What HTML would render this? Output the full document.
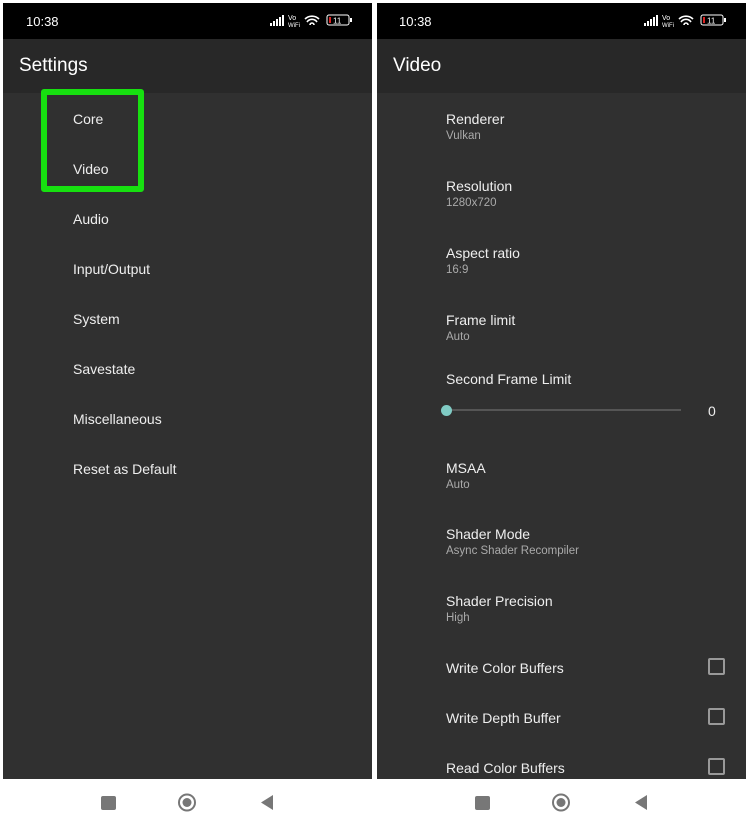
<!DOCTYPE html>
<html><head><style>
body{margin:0;width:750px;height:829px;background:#fff;position:relative;overflow:hidden;font-family:"Liberation Sans",sans-serif}
.p{position:absolute;top:3px;height:776px;background:#303030;overflow:hidden}
.sb{position:absolute;left:0;top:0;right:0;height:36px;background:#000;color:#fff;font-size:13px}
.tb{position:absolute;left:0;top:36px;right:0;height:54px;background:#282828}
.tb span{position:absolute;left:16px;top:16px;color:#fff;font-size:19px}
.t{position:absolute;color:#eee;font-size:14px;white-space:nowrap}
.s{position:absolute;color:#aaa;font-size:11.5px;white-space:nowrap}
.cb{position:absolute;left:331px;width:13px;height:13px;border:2px solid #999;border-radius:2px}
.ic{position:absolute;right:22px;top:11px;color:#fff;font-size:9px}
</style></head><body>
<div class="p" style="left:3px;width:369px">
 <div class="sb"><span style="position:absolute;left:23px;top:11px">10:38</span>
  <svg style="position:absolute;left:267px;top:10px" width="90" height="16"><g fill="#fff"><rect x="0" y="10" width="2" height="3"/><rect x="3" y="8" width="2" height="5"/><rect x="6" y="6" width="2" height="7"/><rect x="9" y="4" width="2" height="9"/><rect x="12" y="2" width="2" height="11"/></g><text x="18" y="7" fill="#fff" font-size="7" font-family="Liberation Sans">Vo</text><text x="18" y="14" fill="#fff" font-size="6" font-family="Liberation Sans">WiFi</text><path d="M35 6a10 10 0 0 1 14 0M37 9a6 6 0 0 1 10 0M40 12a2 2 0 0 1 4 0" stroke="#fff" stroke-width="1.6" fill="none"/><rect x="57" y="2" width="22" height="10" rx="2" stroke="#fff" fill="none"/><rect x="59" y="4" width="2" height="6" fill="#d22"/><text x="63" y="10.5" fill="#fff" font-size="8" font-family="Liberation Sans">11</text><rect x="80" y="5" width="2" height="4" fill="#fff"/></svg></div>
 <div class="tb"><span>Settings</span></div>
 <div class="t" style="left:70px;top:108px">Core</div>
 <div class="t" style="left:70px;top:158px">Video</div>
 <div class="t" style="left:70px;top:208px">Audio</div>
 <div class="t" style="left:70px;top:258px">Input/Output</div>
 <div class="t" style="left:70px;top:308px">System</div>
 <div class="t" style="left:70px;top:358px">Savestate</div>
 <div class="t" style="left:70px;top:408px">Miscellaneous</div>
 <div class="t" style="left:70px;top:458px">Reset as Default</div>
 <div style="position:absolute;left:38px;top:86px;width:91px;height:91px;border:6px solid #17e010;border-radius:3px"></div>
</div>
<div class="p" style="left:377px;width:369px">
 <div class="sb"><span style="position:absolute;left:22px;top:11px">10:38</span>
  <svg style="position:absolute;left:267px;top:10px" width="90" height="16"><g fill="#fff"><rect x="0" y="10" width="2" height="3"/><rect x="3" y="8" width="2" height="5"/><rect x="6" y="6" width="2" height="7"/><rect x="9" y="4" width="2" height="9"/><rect x="12" y="2" width="2" height="11"/></g><text x="18" y="7" fill="#fff" font-size="7" font-family="Liberation Sans">Vo</text><text x="18" y="14" fill="#fff" font-size="6" font-family="Liberation Sans">WiFi</text><path d="M35 6a10 10 0 0 1 14 0M37 9a6 6 0 0 1 10 0M40 12a2 2 0 0 1 4 0" stroke="#fff" stroke-width="1.6" fill="none"/><rect x="57" y="2" width="22" height="10" rx="2" stroke="#fff" fill="none"/><rect x="59" y="4" width="2" height="6" fill="#d22"/><text x="63" y="10.5" fill="#fff" font-size="8" font-family="Liberation Sans">11</text><rect x="80" y="5" width="2" height="4" fill="#fff"/></svg></div>
 <div class="tb"><span>Video</span></div>
 <div class="t" style="left:69px;top:108px">Renderer</div><div class="s" style="left:69px;top:127px">Vulkan</div>
 <div class="t" style="left:69px;top:175px">Resolution</div><div class="s" style="left:69px;top:194px">1280x720</div>
 <div class="t" style="left:69px;top:242px">Aspect ratio</div><div class="s" style="left:69px;top:261px">16:9</div>
 <div class="t" style="left:69px;top:309px">Frame limit</div><div class="s" style="left:69px;top:328px">Auto</div>
 <div class="t" style="left:69px;top:368px">Second Frame Limit</div>
 <div style="position:absolute;left:69px;top:406px;width:235px;height:2px;background:#555"></div>
 <div style="position:absolute;left:64px;top:402px;width:11px;height:11px;border-radius:50%;background:#80cbc4"></div>
 <div class="t" style="left:331px;top:400px">0</div>
 <div class="t" style="left:69px;top:457px">MSAA</div><div class="s" style="left:69px;top:476px">Auto</div>
 <div class="t" style="left:69px;top:523px">Shader Mode</div><div class="s" style="left:69px;top:542px">Async Shader Recompiler</div>
 <div class="t" style="left:69px;top:590px">Shader Precision</div><div class="s" style="left:69px;top:609px">High</div>
 <div class="t" style="left:69px;top:657px">Write Color Buffers</div><div class="cb" style="top:655px"></div>
 <div class="t" style="left:69px;top:707px">Write Depth Buffer</div><div class="cb" style="top:705px"></div>
 <div class="t" style="left:69px;top:757px">Read Color Buffers</div><div class="cb" style="top:755px"></div>
</div>
<svg style="position:absolute;left:0;top:780px" width="750" height="49">
 <g fill="#777" stroke="#777">
 <rect x="101" y="16" width="15" height="14" rx="2" stroke="none"/>
 <circle cx="187" cy="22.5" r="8" fill="none" stroke-width="2"/><circle cx="187" cy="22.5" r="4.5" stroke="none"/>
 <path d="M273 15v15l-12-7.5z" stroke="none"/>
 <rect x="475" y="16" width="15" height="14" rx="2" stroke="none"/>
 <circle cx="561" cy="22.5" r="8" fill="none" stroke-width="2"/><circle cx="561" cy="22.5" r="4.5" stroke="none"/>
 <path d="M647 15v15l-12-7.5z" stroke="none"/>
 </g></svg>
</body></html>
